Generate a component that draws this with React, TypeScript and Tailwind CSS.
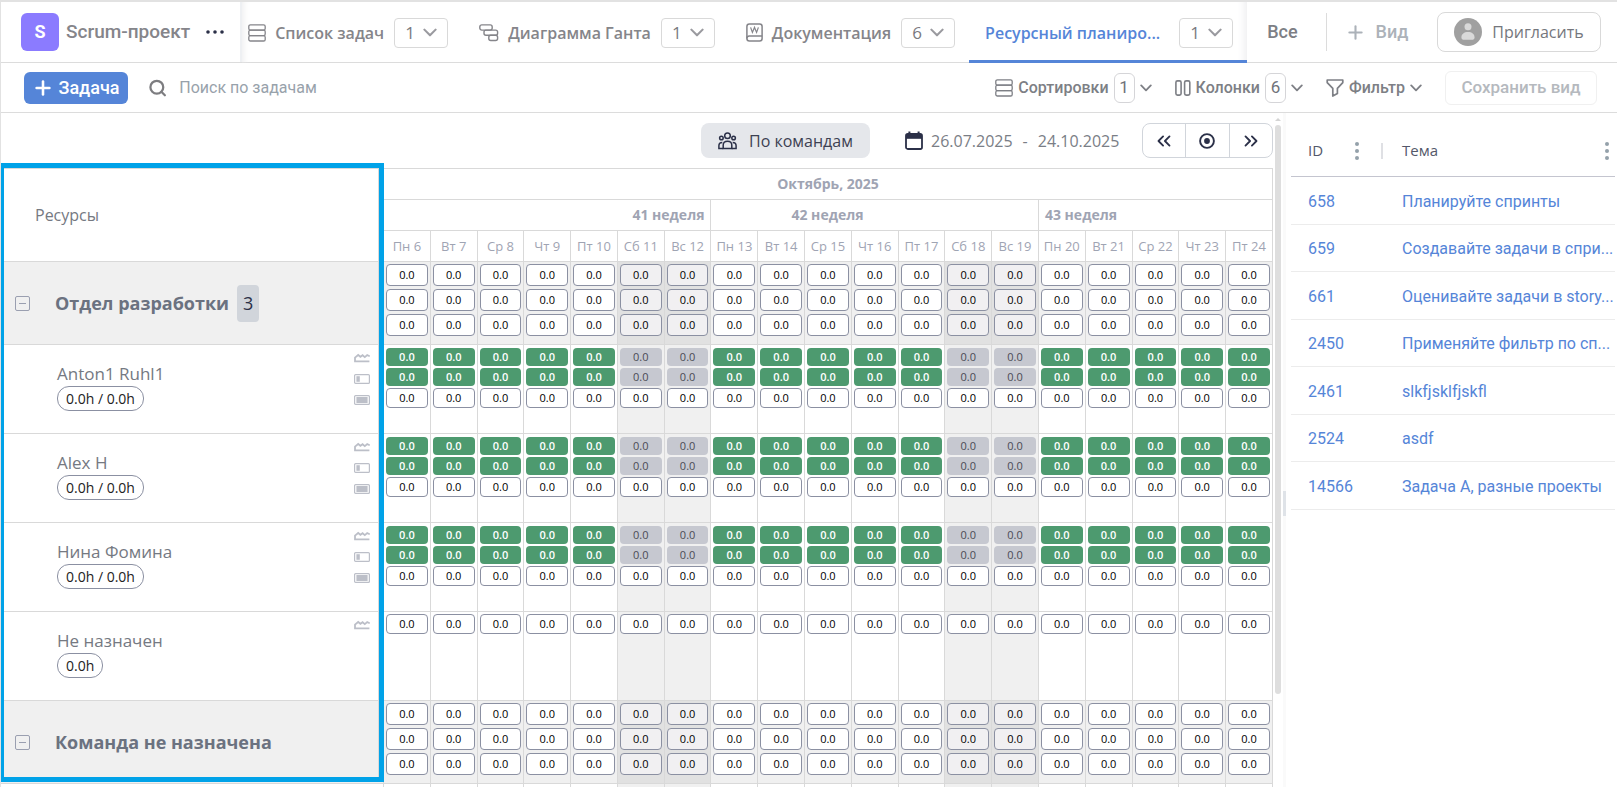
import { useState } from "react";
import type { ReactNode } from "react";
import { ChevronsLeft, ChevronsRight, Plus, Search } from "lucide-react";

const DAYS = [
  "Пн 6", "Вт 7", "Ср 8", "Чт 9", "Пт 10", "Сб 11", "Вс 12",
  "Пн 13", "Вт 14", "Ср 15", "Чт 16", "Пт 17", "Сб 18", "Вс 19",
  "Пн 20", "Вт 21", "Ср 22", "Чт 23", "Пт 24",
];

type Row =
  | { kind: "group"; name: string; count?: number }
  | { kind: "member"; name: string; hours: string }
  | { kind: "unassigned"; name: string; hours: string };

const ROWS: Row[] = [
  { kind: "group", name: "Отдел разработки", count: 3 },
  { kind: "member", name: "Anton1 Ruhl1", hours: "0.0h / 0.0h" },
  { kind: "member", name: "Alex H", hours: "0.0h / 0.0h" },
  { kind: "member", name: "Нина Фомина", hours: "0.0h / 0.0h" },
  { kind: "unassigned", name: "Не назначен", hours: "0.0h" },
  { kind: "group", name: "Команда не назначена" },
];

const TASKS = [
  { id: "658", title: "Планируйте спринты" },
  { id: "659", title: "Создавайте задачи в спри..." },
  { id: "661", title: "Оценивайте задачи в story..." },
  { id: "2450", title: "Применяйте фильтр по сп..." },
  { id: "2461", title: "slkfjsklfjskfl" },
  { id: "2524", title: "asdf" },
  { id: "14566", title: "Задача А, разные проекты" },
];

const isWeekend = (day: string) => day.startsWith("Сб") || day.startsWith("Вс");

function Chevron({ width = 12 }: { width?: number }) {
  return (
    <svg width={width} viewBox="0 0 12 8" fill="none" stroke="currentColor" strokeWidth="1.8" strokeLinecap="round" strokeLinejoin="round" className="shrink-0">
      <path d="M1.2 1.4L6 6.3l4.8-4.9" />
    </svg>
  );
}

function ListIcon() {
  return (
    <svg width="18" height="18" viewBox="0 0 18 18" fill="none" stroke="currentColor" strokeWidth="1.3" className="shrink-0">
      <rect x="0.8" y="0.8" width="16.4" height="5.4" rx="1.6" />
      <rect x="0.8" y="6.2" width="16.4" height="5.4" rx="1.6" />
      <rect x="0.8" y="11.6" width="16.4" height="5.4" rx="1.6" />
    </svg>
  );
}

function GanttIcon() {
  return (
    <svg width="20" height="18" viewBox="0 0 20 18" fill="none" stroke="currentColor" strokeWidth="1.4" className="shrink-0">
      <rect x="0.8" y="0.9" width="12.4" height="5.2" rx="2" />
      <rect x="5" y="6.1" width="13.6" height="5.2" rx="2" />
      <rect x="9.8" y="11.3" width="8.8" height="5.2" rx="2" />
    </svg>
  );
}

function DocIcon() {
  return (
    <svg width="17" height="19" viewBox="0 0 17 19" fill="none" stroke="currentColor" strokeWidth="1.5" className="shrink-0">
      <rect x="0.9" y="0.9" width="15.2" height="17.2" rx="2.5" />
      <path d="M0.9 15.4c0-1.7 1-2.4 2.4-2.4h12.8" />
      <path d="M4.6 4.4l1.8 5 2.1-5 2.1 5 1.8-5" strokeWidth="1.2" />
    </svg>
  );
}

function ColumnsIcon() {
  return (
    <svg width="16" height="16" viewBox="0 0 16 16" fill="none" stroke="currentColor" strokeWidth="1.6" className="shrink-0">
      <rect x="0.9" y="0.9" width="5.2" height="14.2" rx="1.6" />
      <rect x="9.6" y="0.9" width="5.2" height="14.2" rx="1.6" />
    </svg>
  );
}

function FilterIcon() {
  return (
    <svg width="18" height="18" viewBox="0 0 18 18" fill="none" stroke="currentColor" strokeWidth="1.7" strokeLinejoin="round" className="shrink-0">
      <path d="M1.2 1h15.6v2.6l-5.4 5.8v5l-4.6 2.6V9.4L1.2 3.6z" />
    </svg>
  );
}

function TeamIcon() {
  return (
    <svg width="19" height="18" viewBox="0 0 19 18" fill="none" stroke="#2b3048" strokeWidth="1.5" className="shrink-0">
      <circle cx="9.5" cy="3.8" r="2.8" />
      <circle cx="3.4" cy="6" r="1.8" />
      <circle cx="15.6" cy="6" r="1.8" />
      <path d="M5.2 16.4v-3.2c0-2.4 1.8-4 4.3-4s4.3 1.6 4.3 4v3.2z" />
      <path d="M5.2 16.4H0.9v-2.6c0-1.9 1.3-3.2 3.4-3.2M13.8 16.4h4.3v-2.6c0-1.9-1.3-3.2-3.4-3.2" />
    </svg>
  );
}

function CalendarIcon() {
  return (
    <svg width="18" height="20" viewBox="0 0 18 20" fill="none" className="shrink-0">
      <rect x="1" y="3" width="16" height="15" rx="1.8" stroke="#2b3048" strokeWidth="1.8" />
      <path d="M1 3.4h16v4.4H1z" fill="#2b3048" />
      <path d="M4.4 0.4v4M13.6 0.4v4" stroke="#2b3048" strokeWidth="2" />
    </svg>
  );
}

function AvatarIcon() {
  return (
    <svg width="28" height="28" viewBox="0 0 28 28" className="shrink-0">
      <circle cx="14" cy="14" r="14" fill="#a0a0a0" />
      <circle cx="14" cy="8.8" r="3.5" fill="#d9d9d9" />
      <path d="M7.4 19.4c0-3.4 2.8-5.4 6.6-5.4s6.6 2 6.6 5.4c0 1.6-1.2 2.3-2.8 2.3h-7.6c-1.6 0-2.8-.7-2.8-2.3z" fill="#d9d9d9" />
    </svg>
  );
}

function DotsIcon() {
  return (
    <svg width="4" height="18" viewBox="0 0 4 18" fill="#94a1aa">
      <circle cx="2" cy="2" r="2" />
      <circle cx="2" cy="9" r="2" />
      <circle cx="2" cy="16" r="2" />
    </svg>
  );
}

function RowIcons({ full }: { full: boolean }) {
  return (
    <div className="flex flex-col gap-[11px] pt-2 text-[#bcbfc8]">
      <svg width="16" height="10" viewBox="0 0 16 10" fill="none" stroke="currentColor" strokeWidth="1.8">
        <path d="M15.4 8.4H1V4.6l3.2-2.6L6.4 3.8l2.2-1.6 2.2 1.9 2.4-2 2.6 1.2" />
      </svg>
      {full && (
        <>
          <svg width="16" height="10" viewBox="0 0 16 10" fill="none" stroke="currentColor" strokeWidth="1.2">
            <rect x="0.6" y="0.6" width="14.8" height="8.8" rx="1" />
            <path d="M2.4 2.2h3.4v5.6h-3.4z" fill="currentColor" stroke="none" />
          </svg>
          <svg width="16" height="10" viewBox="0 0 16 10" fill="none" stroke="currentColor" strokeWidth="1.2">
            <rect x="0.6" y="0.6" width="14.8" height="8.8" rx="1" />
            <path d="M2.4 2h11.2v6h-11.2z" fill="currentColor" stroke="none" />
          </svg>
        </>
      )}
    </div>
  );
}

interface TabProps {
  icon?: ReactNode;
  label: string;
  count: number;
  active?: boolean;
}

function Tab({ icon, label, count, active }: TabProps) {
  return (
    <div
      className={
        active
          ? "flex shrink-0 items-center gap-[19px] self-stretch border-b-3 border-[#5585d8] pt-[3px] pr-[14px] pl-4 text-[#5585d8]"
          : "flex shrink-0 items-center gap-[10px] pr-[14px] pl-[17px] text-[#85858a] first:pl-[6px]"
      }
    >
      <a href="#" className="flex items-center gap-[9px] text-base font-semibold">
        {icon}
        {label}
      </a>
      <button className="flex h-[30px] w-[54px] items-center justify-center gap-2 rounded border border-[#d9d9d9] text-[17px] text-[#7a7a7f]">
        {count}
        <span className="text-[#9a9a9f]">
          <Chevron width={14} />
        </span>
      </button>
    </div>
  );
}

function ToolButton({ icon, label, count }: { icon: ReactNode; label: string; count?: number }) {
  return (
    <button className="flex items-center gap-[5px] text-base font-medium text-[#7d7f85]">
      {icon}
      <span>{label}</span>
      {count !== undefined && (
        <span className="flex h-[30px] w-[21px] items-center justify-center rounded-md border border-[#d5d5d8] text-[17px] font-normal text-[#70737a]">
          {count}
        </span>
      )}
      <Chevron />
    </button>
  );
}

function DayCell({ kind, weekend }: { kind: Row["kind"]; weekend: boolean }) {
  if (kind === "group") {
    const tone = weekend ? "bg-[#f1f0f2]" : "bg-white";
    return (
      <div className="flex flex-col gap-[3px] pt-[2px]">
        {[0, 1, 2].map((i) => (
          <span key={i} className={`block h-[22px] rounded border border-[#8b90a2] leading-5 ${tone}`}>
            0.0
          </span>
        ))}
      </div>
    );
  }
  if (kind === "unassigned") {
    return (
      <div className="pt-[2px]">
        <span className="block h-5 rounded border border-[#8b90a2] bg-white leading-[18px]">0.0</span>
      </div>
    );
  }
  const load = weekend ? "bg-[#c6c8d0] text-[#4b4b55]" : "bg-[#4d9a6f] font-semibold text-white";
  return (
    <div className="flex flex-col gap-[2px] pt-[3px]">
      <span className={`block h-[18px] rounded leading-[18px] ${load}`}>0.0</span>
      <span className={`block h-[18px] rounded leading-[18px] ${load}`}>0.0</span>
      <span className="block h-5 rounded border border-[#8b90a2] bg-white leading-[18px]">0.0</span>
    </div>
  );
}

function ResourceCell({ row }: { row: Row }) {
  if (row.kind === "group") {
    return (
      <div className="flex h-full items-center pl-[14px]">
        <button aria-label="Свернуть" className="flex size-[15px] items-center justify-center rounded-xs border border-[#9a9fb0]">
          <span className="h-px w-[7px] bg-[#9a9fb0]" />
        </button>
        <span className="pl-[25px] text-lg font-bold text-[#6b7280]">{row.name}</span>
        {row.count && (
          <span className="ml-2 flex h-[37px] w-[22px] items-center justify-center rounded bg-[#d1d5db] text-lg text-[#2b3048]">
            {row.count}
          </span>
        )}
      </div>
    );
  }
  return (
    <div className="flex h-full justify-between pr-[13px] pl-14">
      <div className="pt-[17px]">
        <div className="text-[17px] leading-6 font-medium text-[#757982]">{row.name}</div>
        <span className="block h-[25px] w-fit rounded-xl border border-[#8b90a2] px-2 text-sm leading-[23px] text-[#222]">
          {row.hours}
        </span>
      </div>
      <RowIcons full={row.kind === "member"} />
    </div>
  );
}

function Header() {
  return (
    <header className="flex h-[61px] shrink-0 items-center border-b border-[#dcdcdc]">
      <div className="flex h-full shrink-0 items-center border-r-2 border-[#eef0f3] pr-4 pl-5">
        <span className="flex size-[38px] items-center justify-center rounded-md bg-[#8b7bff] font-[Roboto,sans-serif] text-lg font-bold text-white">
          S
        </span>
        <span className="pl-[7px] font-[Roboto,sans-serif] text-[19px] font-medium text-[#85858a]">Scrum-проект</span>
        <button aria-label="Меню проекта" className="pl-4">
          <svg width="18" height="4" viewBox="0 0 18 4" fill="#2b3048">
            <circle cx="2" cy="2" r="1.8" />
            <circle cx="9" cy="2" r="1.8" />
            <circle cx="16" cy="2" r="1.8" />
          </svg>
        </button>
      </div>
      <nav className="-mb-px flex h-[61px] shrink-0 items-center shadow-[inset_8px_0_8px_-8px_#e6e6e8,inset_-10px_0_8px_-8px_#ececee]">
        <Tab icon={<ListIcon />} label="Список задач" count={1} />
        <Tab icon={<GanttIcon />} label="Диаграмма Ганта" count={1} />
        <Tab icon={<DocIcon />} label="Документация" count={6} />
        <Tab label="Ресурсный планиро..." count={1} active />
      </nav>
      <div className="flex flex-1 items-center pr-4 pl-5">
        <a href="#" className="font-[Roboto,sans-serif] text-lg font-medium text-[#7d7f85]">Все</a>
        <span className="mr-[18px] ml-7 h-[38px] w-px bg-[#dcdcdc]" />
        <button className="flex items-center gap-[10px] font-[Roboto,sans-serif] text-lg font-medium text-[#acb2b9]">
          <Plus size={21} strokeWidth={2.4} />
          Вид
        </button>
        <button className="ml-auto flex h-10 w-[164px] items-center justify-center gap-[10px] rounded-lg border border-[#d9d9d9] text-base text-[#75777d]">
          <AvatarIcon />
          Пригласить
        </button>
      </div>
    </header>
  );
}

function Toolbar() {
  const [query, setQuery] = useState("");

  return (
    <div className="flex h-[50px] shrink-0 items-center border-b border-[#dcdcdc] pr-5 pl-[23px] font-[Roboto,sans-serif]">
      <button className="flex h-8 w-[104px] items-center justify-center gap-1 rounded-md bg-[#5585d8] text-lg font-medium text-white">
        <Plus size={22} strokeWidth={2.8} />
        Задача
      </button>
      <label className="flex flex-1 items-center gap-3 pl-5">
        <Search size={20} strokeWidth={2.8} className="text-[#7d7d80]" />
        <input
          type="text"
          aria-label="Поиск по задачам"
          value={query}
          onChange={(e) => setQuery(e.target.value)}
          placeholder="Поиск по задачам"
          className="w-full text-base outline-none placeholder:text-[#98a2ab]"
        />
      </label>
      <div className="flex items-center gap-[23px]">
        <ToolButton icon={<ListIcon />} label="Сортировки" count={1} />
        <ToolButton icon={<ColumnsIcon />} label="Колонки" count={6} />
        <ToolButton icon={<FilterIcon />} label="Фильтр" />
        <button disabled className="h-[34px] w-[152px] rounded-md border border-[#f0f0f0] text-[17px] font-medium text-[#b5b9be]">
          Сохранить вид
        </button>
      </div>
    </div>
  );
}

function PlannerControls() {
  return (
    <div className="flex h-[55px] items-center justify-end">
      <button className="flex h-[35px] w-[169px] items-center justify-center gap-3 rounded-lg bg-[#e5e7eb] text-base text-[#3d4152]">
        <TeamIcon />
        По командам
      </button>
      <button className="flex w-[272px] items-center gap-2 pl-[35px] text-base text-[#7a7e86]">
        <CalendarIcon />
        <span className="flex gap-[10px]">
          <span>26.07.2025</span>
          <span>-</span>
          <span>24.10.2025</span>
        </span>
      </button>
      <div className="flex h-[35px] w-[131px] divide-x divide-[#d1d5db] rounded-lg border border-[#d1d5db] text-[#2b3048]">
        <button aria-label="Назад" className="flex flex-1 items-center justify-center">
          <ChevronsLeft size={22} />
        </button>
        <button aria-label="Сегодня" className="flex flex-1 items-center justify-center">
          <svg width="16" height="16" viewBox="0 0 16 16" fill="none">
            <circle cx="8" cy="8" r="6.9" stroke="currentColor" strokeWidth="1.9" />
            <circle cx="8" cy="8" r="2.9" fill="currentColor" />
          </svg>
        </button>
        <button aria-label="Вперёд" className="flex flex-1 items-center justify-center">
          <ChevronsRight size={22} />
        </button>
      </div>
    </div>
  );
}

function Planner() {
  return (
    <div className="relative">
      <table className="w-full table-fixed border-separate border-spacing-0 border-t border-[#d9d9d9]">
        <colgroup>
          <col className="w-[383px]" />
          {DAYS.map((day) => (
            <col key={day} />
          ))}
        </colgroup>
        <thead className="text-sm text-[#9fa4b3]">
          <tr>
            <th rowSpan={3} className="border-r border-b border-[#d9d9d9] pl-[34px] text-left text-base font-normal text-[#757982]">
              Ресурсы
            </th>
            <th colSpan={19} className="h-[31px] border-r border-b border-[#d9d9d9] p-0 font-bold">Октябрь, 2025</th>
          </tr>
          <tr>
            <th colSpan={7} className="h-[31px] border-r border-b border-[#d9d9d9] py-0 pr-[6px] text-right font-bold">41 неделя</th>
            <th colSpan={7} className="border-r border-b border-[#d9d9d9] py-0 pl-20 text-left font-bold">42 неделя</th>
            <th colSpan={5} className="border-r border-b border-[#d9d9d9] py-0 pl-[6px] text-left font-bold">43 неделя</th>
          </tr>
          <tr className="text-[13px]">
            {DAYS.map((day) => (
              <th key={day} className="h-[31px] border-r border-b border-[#d9d9d9] p-0 font-normal whitespace-nowrap">
                {day}
              </th>
            ))}
          </tr>
        </thead>
        <tbody>
          {ROWS.map((row) => (
            <tr key={row.name} className={row.kind === "group" ? "h-[83px] bg-[#f0f0f0]" : "h-[89px]"}>
              <td className="h-px border-r border-b border-[#d9d9d9] p-0">
                <ResourceCell row={row} />
              </td>
              {DAYS.map((day) => (
                <td
                  key={day}
                  className={`border-r border-b border-[#d9d9d9] px-[2px] py-0 text-center align-top text-[11px] font-medium text-black ${
                    isWeekend(day) ? "bg-black/6" : ""
                  }`}
                >
                  <DayCell kind={row.kind} weekend={isWeekend(day)} />
                </td>
              ))}
            </tr>
          ))}
          <tr>
            <td className="h-[89px] border-r border-[#d9d9d9]" />
            {DAYS.map((day) => (
              <td key={day} className={`border-r border-[#d9d9d9] ${isWeekend(day) ? "bg-black/6" : ""}`} />
            ))}
          </tr>
        </tbody>
      </table>
      {/* Highlight frame over the resource column */}
      <div className="pointer-events-none absolute -top-[5px] -left-px h-[619px] w-[384px] border-5 border-l-4 border-[#00a2e8] shadow-[inset_-1px_0_0_#d9d9d9]" />
    </div>
  );
}

function TaskPanel() {
  return (
    <aside className="w-[331px] shrink-0 pr-[2px] pl-[5px] font-[Roboto,sans-serif] text-[#5585d8]">
      <table className="w-full table-fixed border-separate border-spacing-0 text-left text-base">
        <colgroup>
          <col className="w-[92px]" />
          <col />
        </colgroup>
        <thead className="font-['Open_Sans',sans-serif] text-[15px] text-[#54586a]">
          <tr>
            <th className="h-16 border-b border-[#c4c5cf] p-0 pt-3 pl-[17px] font-medium">
              <span className="flex items-center justify-between">
                ID
                <span className="flex items-center gap-[22px]">
                  <DotsIcon />
                  <span className="h-4 w-[2px] bg-[#dfe0e4]" />
                </span>
              </span>
            </th>
            <th className="border-b border-[#c4c5cf] p-0 pt-3 pr-[6px] pl-[19px] font-medium">
              <span className="flex items-center justify-between">
                Тема
                <DotsIcon />
              </span>
            </th>
          </tr>
        </thead>
        <tbody>
          {TASKS.map((task) => (
            <tr key={task.id} className="odd:h-12 even:h-[47px]">
              <td className="border-b border-[#ececec] p-0 pt-[2px] pl-[17px]">
                <a href="#">{task.id}</a>
              </td>
              <td className="border-b border-[#ececec] p-0 pt-[2px] pl-[19px] whitespace-nowrap">
                <a href="#">{task.title}</a>
              </td>
            </tr>
          ))}
        </tbody>
      </table>
    </aside>
  );
}

export default function App() {
  return (
    <div className="flex h-screen flex-col overflow-hidden border-t-2 border-l border-[#e2e2e2] bg-white font-['Open_Sans','Noto_Sans',sans-serif]">
      <Header />
      <Toolbar />
      <main className="flex min-h-0 flex-1">
        <section className="min-w-0 flex-1">
          <PlannerControls />
          <Planner />
        </section>
        <div className="flex w-[10px] shrink-0 flex-col items-center pt-[3px]">
          <svg width="6" height="3" viewBox="0 0 6 3" className="my-[2px]" fill="#d4d4d4">
            <path d="M3 0l3 3H0z" />
          </svg>
          <div className="mt-[2px] mb-[93px] w-[6px] flex-1 rounded-full bg-[#dedede]" />
        </div>
        <div className="flex w-[3px] shrink-0 items-center bg-[#fafafa]">
          <span className="mt-[106px] h-[25px] w-[3px] bg-[#dfe3e8]" />
        </div>
        <TaskPanel />
      </main>
    </div>
  );
}
